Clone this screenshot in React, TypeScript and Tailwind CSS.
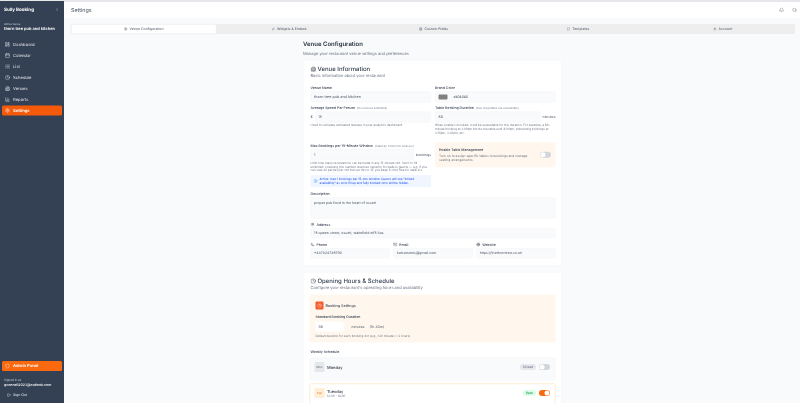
import React from 'react';
import {
  LayoutDashboard, Calendar, List, Clock, Building2, BarChart3, Settings, Shield, LogOut, ChevronLeft,
  Bell, Search, Code2, FileText, MessageSquare, User, MapPin, Phone, Mail, Globe, Info,
} from 'lucide-react';

const navItems = [
  { label: 'Dashboard', icon: LayoutDashboard },
  { label: 'Calendar', icon: Calendar },
  { label: 'List', icon: List },
  { label: 'Schedule', icon: Clock },
  { label: 'Venues', icon: Building2 },
  { label: 'Reports', icon: BarChart3 },
  { label: 'Settings', icon: Settings, active: true },
];

const tabs = [
  { label: 'Venue Configuration', icon: Settings, active: true },
  { label: 'Widgets & Embed', icon: Code2 },
  { label: 'Custom Fields', icon: FileText },
  { label: 'Templates', icon: MessageSquare },
  { label: 'Account', icon: User },
];

const Label = ({ children, className = '' }: { children: React.ReactNode; className?: string }) => (
  <p className={`text-sm leading-5 font-medium text-gray-700 ${className}`}>{children}</p>
);

const Input = ({ value, className = '' }: { value: string; className?: string }) => (
  <div className={`h-10 bg-gray-50 border-2 border-gray-100 rounded-md px-3 flex items-center text-sm text-gray-600 ${className}`}>
    {value}
  </div>
);

const Help = ({ children }: { children: React.ReactNode }) => (
  <p className="text-xs leading-[14.4px] text-gray-500">{children}</p>
);

const Toggle = ({ on = false }: { on?: boolean }) => (
  <div className={`w-11 h-6 rounded-full p-0.5 flex ${on ? 'bg-[#f96a10] justify-end' : 'bg-gray-300 justify-start'}`}>
    <div className="w-5 h-5 bg-white rounded-full" />
  </div>
);

// the page is laid out at its real 3200px width, then shrunk to the 800px window
export default function App() {
  return (
    <div className="w-[800px] h-[403px] overflow-hidden">
      <div className="w-[3200px] h-[1612px] origin-top-left scale-[0.25] flex bg-gray-50 font-['Inter',sans-serif] antialiased [text-rendering:geometricPrecision] blur-[1px]">
        <aside className="w-64 shrink-0 bg-[#344054] text-white flex flex-col border-t-4 border-gray-200">
          <div className="h-[68px] flex items-center justify-between pl-4 pr-5">
            <span className="text-lg font-bold">Sully Booking</span>
            <ChevronLeft size={16} />
          </div>
          <div className="px-4 mt-4">
            <p className="text-[10.4px] leading-4 text-gray-300">Active Venue</p>
            <p className="text-base leading-[22px] font-semibold">thorn tree pub and kitchen</p>
          </div>
          <nav className="mt-8 px-2 flex flex-col gap-1">
            {navItems.map(item => (
              <div
                key={item.label}
                className={`h-10 flex items-center gap-3 px-3 rounded-md text-[16.8px] ${item.active ? 'bg-[#f55a0a] font-semibold' : 'text-gray-200'}`}
              >
                <item.icon size={20} />
                {item.label}
              </div>
            ))}
          </nav>
          <div className="mt-auto px-2 pb-5">
            <div className="h-10 bg-[#f96a10] rounded-md flex items-center gap-3 px-3 text-[16.8px] font-semibold">
              <Shield size={20} />
              Admin Panel
            </div>
            <div className="px-2 mt-7">
              <p className="text-xs leading-4 text-gray-300">Signed in as</p>
              <p className="text-sm leading-[22px] font-medium">gconnell2023@outlook.com</p>
            </div>
            <div className="flex items-center gap-2 px-5 mt-[18px] h-6 text-sm text-gray-200">
              <LogOut size={16} />
              Sign Out
            </div>
          </div>
        </aside>

        <main className="flex-1 min-w-0 flex flex-col">
          <header className="h-[72px] shrink-0 bg-white border-t-8 border-gray-200 flex items-center justify-between pl-7 pr-3">
            <h1 className="text-[21.6px] text-gray-600">Settings</h1>
            <div className="flex items-center gap-8 text-gray-500">
              <Bell size={20} />
              <Search size={20} />
            </div>
          </header>

          <div className="flex-1 min-h-0 pt-6">
            <div className="ml-7 mr-5 h-10 flex bg-[#eeeeef] rounded">
              {tabs.map(tab => (
                <div
                  key={tab.label}
                  className={`flex-1 flex items-center justify-center gap-2 text-sm text-gray-600 ${tab.active ? 'bg-white border-2 border-gray-200 rounded' : ''}`}
                >
                  <tab.icon size={14} />
                  {tab.label}
                </div>
              ))}
            </div>

            <div className="w-[1036px] ml-[956px] mt-5">
              <h2 className="text-2xl leading-9 font-semibold text-gray-800">Venue Configuration</h2>
              <p className="text-base leading-5 mt-3 text-gray-500">Manage your restaurant venue settings and preferences</p>

              <section className="mt-4 h-[824px] bg-white rounded-lg border-2 border-gray-100 pl-7 pr-6 pt-4">
                <h3 className="flex items-center gap-1.5 text-2xl leading-9 font-medium text-gray-700">
                  <Building2 size={22} />
                  Venue Information
                </h3>
                <p className="text-base leading-4 text-gray-500">Basic information about your restaurant</p>

                <div className="grid grid-cols-2 gap-x-4 mt-8">
                  <div className="flex flex-col">
                    <Label>Venue Name</Label>
                    <Input value="thorn tree pub and kitchen" className="mt-1 h-11 text-[15px]" />
                    <Label className="mt-3">
                      Average Spend Per Person <span className="text-[11px] font-normal text-gray-500 ml-1">(for revenue estimates)</span>
                    </Label>
                    <div className="flex items-center gap-2 mt-1">
                      <span className="text-[15px] font-medium text-gray-700">£</span>
                      <Input value="15" className="flex-1 h-11" />
                    </div>
                    <div className="mt-1"><Help>Used to calculate estimated revenue in your analytics dashboard</Help></div>
                    <Label className="mt-16">
                      Max Bookings per 15-Minute Window <span className="text-[11px] font-normal text-gray-500 ml-1">(capacity control for walk-ins)</span>
                    </Label>
                    <div className="flex items-center gap-2 mt-1">
                      <Input value="1" className="flex-1 h-11" />
                      <span className="text-sm text-gray-600">bookings</span>
                    </div>
                    <div className="mt-1">
                      <Help>Limit how many reservations can be made in any 15-minute slot. Set 0 to fill unlimited. Lowering this number reserves capacity for walk-in guests — e.g. if you can seat 20 parties per slot but set this to 15, you keep 5 slots free for walk-ins.</Help>
                    </div>
                    <div className="mt-3 h-12 bg-blue-50 rounded flex items-center gap-2 px-3">
                      <Info size={16} className="shrink-0 text-blue-500" />
                      <p className="text-xs leading-[14.4px] text-blue-700">Active: max 1 bookings per 15-min window. Guests will see "limited availability" as slots fill up and fully booked slots will be hidden.</p>
                    </div>
                  </div>

                  <div className="flex flex-col">
                    <Label>Brand Color</Label>
                    <div className="mt-1 h-11 bg-gray-50 border-2 border-gray-100 rounded-md flex items-center px-3 gap-6 text-[13px] text-gray-600">
                      <span className="w-9 h-5 bg-[#808080] rounded-sm" />
                      #808080
                    </div>
                    <Label className="mt-3">
                      Table Booking Duration <span className="text-[11px] font-normal text-gray-500 ml-1">(how long tables are unavailable)</span>
                    </Label>
                    <div className="flex items-center gap-2 mt-1">
                      <Input value="60" className="flex-1 h-11" />
                      <span className="text-sm text-gray-600">minutes</span>
                    </div>
                    <div className="mt-1">
                      <Help>When a table is booked, it will be unavailable for this duration. For example, a 60-minute booking at 3:00pm blocks the table until 4:00pm, preventing bookings at 3:15pm, 3:30pm, etc.</Help>
                    </div>
                    <div className="mt-8 h-[100px] bg-orange-50 rounded flex items-center justify-between pl-4 pr-[18px]">
                      <div className="w-[400px]">
                        <p className="text-sm leading-6 font-medium text-gray-700">Enable Table Management</p>
                        <p className="text-[13px] leading-[18px] text-gray-500">Turn on to assign specific tables to bookings and manage seating arrangements.</p>
                      </div>
                      <Toggle />
                    </div>
                  </div>
                </div>

                <Label className="mt-[18px]">Description</Label>
                <div className="mt-1 h-[84px] bg-gray-50 border-2 border-gray-100 rounded-md px-3 pt-3 text-sm leading-4 text-gray-600">
                  proper pub food in the heart of ossett
                </div>

                <Label className="mt-3.5 flex items-center gap-2"><MapPin size={16} />Address</Label>
                <Input value="15 queen street, ossett, wakefield wf5 8as" className="mt-1" />

                <div className="grid grid-cols-3 gap-x-3.5 mt-4">
                  <div>
                    <Label className="flex items-center gap-2"><Phone size={16} />Phone</Label>
                    <Input value="+447824726798" className="mt-1" />
                  </div>
                  <div>
                    <Label className="flex items-center gap-2"><Mail size={16} />Email</Label>
                    <Input value="katcaments@gmail.com" className="mt-1" />
                  </div>
                  <div>
                    <Label className="flex items-center gap-2"><Globe size={16} />Website</Label>
                    <Input value="https://thethorntree.co.uk" className="mt-1" />
                  </div>
                </div>
              </section>

              <section className="mt-6 h-[560px] bg-white rounded-lg border-2 border-gray-100 px-6 pt-4">
                <h3 className="flex items-center gap-1.5 pl-1 text-2xl leading-9 font-medium text-gray-700">
                  <Clock size={22} />
                  Opening Hours &amp; Schedule
                </h3>
                <p className="pl-1 text-base leading-4 text-gray-500">Configure your restaurant's operating hours and availability</p>

                <div className="mt-5 h-48 bg-orange-50 rounded-lg px-6 pt-7">
                  <div className="flex items-center gap-2 text-[15px] font-medium text-gray-700">
                    <span className="w-8 h-8 bg-[#f55a2a] rounded flex items-center justify-center text-white"><Clock size={18} /></span>
                    Booking Settings
                  </div>
                  <Label className="mt-[18px]">Standard Booking Duration</Label>
                  <div className="flex items-center mt-2.5 text-sm text-gray-600">
                    <div className="w-28 h-10 bg-white rounded flex items-center px-3">90</div>
                    <span className="ml-8">minutes</span>
                    <span className="ml-5">(1h 30m)</span>
                  </div>
                  <p className="mt-2 text-xs leading-4 text-gray-500">Default duration for each booking slot (e.g., 120 minutes = 2 hours)</p>
                </div>

                <Label className="mt-7 ml-1">Weekly Schedule</Label>
                <div className="mt-3 h-[92px] bg-gray-50 border-2 border-gray-100 rounded-lg pl-[18px] pr-5 pt-4 flex items-start justify-between">
                  <div className="flex items-center gap-2.5">
                    <span className="w-10 h-10 bg-gray-200 rounded flex items-center justify-center text-[11px] text-gray-600">Mon</span>
                    <span className="text-base font-medium text-gray-700">Monday</span>
                  </div>
                  <div className="flex items-center gap-3 mt-2">
                    <span className="w-16 h-6 bg-gray-200 rounded-full flex items-center justify-center text-xs text-gray-600">Closed</span>
                    <Toggle />
                  </div>
                </div>
                <div className="mt-3 h-[92px] bg-white border-2 border-orange-200 rounded-lg pl-[18px] pr-5 pt-4 flex items-start justify-between">
                  <div className="flex items-center gap-2.5">
                    <span className="w-10 h-10 bg-orange-100 rounded flex items-center justify-center text-[11px] text-orange-600">Tue</span>
                    <div>
                      <p className="text-base leading-5 font-medium text-gray-700">Tuesday</p>
                      <p className="text-xs leading-4 text-gray-500">12:00 - 18:00</p>
                    </div>
                  </div>
                  <div className="flex items-center gap-3 mt-2">
                    <span className="w-[52px] h-6 bg-green-100 rounded-full flex items-center justify-center text-xs text-green-700">Open</span>
                    <Toggle on />
                  </div>
                </div>
              </section>
            </div>
          </div>
        </main>
      </div>
    </div>
  );
}
